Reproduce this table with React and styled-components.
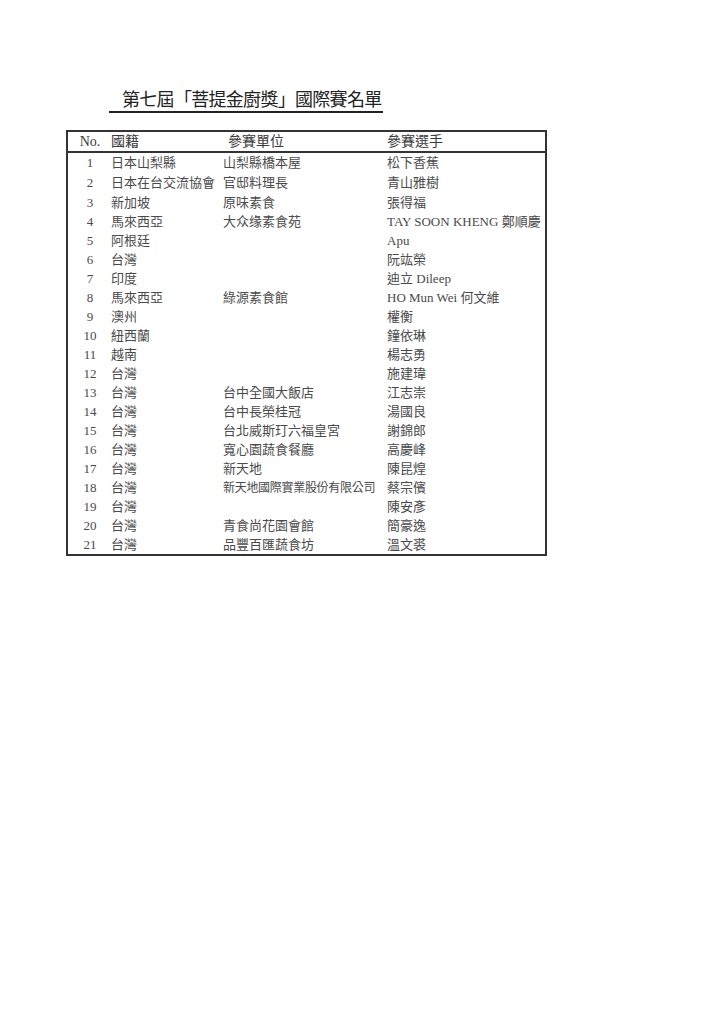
import React from "react";
import styled, { createGlobalStyle } from "styled-components";

const GlobalStyle = createGlobalStyle`
  html, body {
    margin: 0;
    padding: 0;
    background: #ffffff;
  }
  body {
    font-family: "Liberation Serif", "Noto Sans CJK TC", serif;
    color: #333;
  }
`;

const rows = [
  ["1", "日本山梨縣", "山梨縣橋本屋", "松下香蕉"],
  ["2", "日本在台交流協會", "官邸料理長", "青山雅樹"],
  ["3", "新加坡", "原味素食", "張得福"],
  ["4", "馬來西亞", "大众缘素食苑", "TAY SOON KHENG 鄭順慶"],
  ["5", "阿根廷", "", "Apu"],
  ["6", "台灣", "", "阮竑榮"],
  ["7", "印度", "", "迪立 Dileep"],
  ["8", "馬來西亞", "綠源素食館", "HO Mun Wei 何文維"],
  ["9", "澳州", "", "權衡"],
  ["10", "紐西蘭", "", "鐘依琳"],
  ["11", "越南", "", "楊志勇"],
  ["12", "台灣", "", "施建瑋"],
  ["13", "台灣", "台中全國大飯店", "江志崇"],
  ["14", "台灣", "台中長榮桂冠", "湯國良"],
  ["15", "台灣", "台北威斯玎六福皇宮", "謝錦郎"],
  ["16", "台灣", "寬心園蔬食餐廳", "高慶峰"],
  ["17", "台灣", "新天地", "陳昆煌"],
  ["18", "台灣", "新天地國際實業股份有限公司", "蔡宗儐"],
  ["19", "台灣", "", "陳安彥"],
  ["20", "台灣", "青食尚花園會館", "簡豪逸"],
  ["21", "台灣", "品豐百匯蔬食坊", "溫文裘"],
];

const rowHeight = (i) => (i === 0 ? 18 : i === 1 ? 22 : 19);

const Page = styled.div`
  width: 724px;
  height: 1024px;
  padding: 89px 0 0 66px;
  box-sizing: border-box;
`;

const Title = styled.h1`
  margin: 0 0 17px 43px;
  padding-left: 13px;
  width: 261px;
  font-size: 18px;
  font-weight: normal;
  line-height: 22px;
  color: #222;
  border-bottom: 2px solid #222;
  letter-spacing: -0.7px;
  white-space: nowrap;
`;

const Table = styled.div`
  width: 481px;
  border: 2px solid #333;
  box-sizing: border-box;
`;

const Row = styled.div`
  display: grid;
  grid-template-columns: 40px 115px 164px 1fr;
  align-items: center;
  height: ${(p) => p.$h}px;
  font-size: ${(p) => (p.$head ? 14 : 13)}px;
  border-bottom: ${(p) => (p.$head ? "2px solid #333" : "none")};
  box-sizing: ${(p) => (p.$head ? "content-box" : "border-box")};
`;

const Cell = styled.div`
  white-space: nowrap;
  overflow: visible;
  text-align: ${(p) => (p.$center ? "center" : "left")};
  padding-left: ${(p) => p.$pad || 0}px;
  line-height: 1;
  color: ${(p) => (p.$dark ? "#3a3a3a" : "#4a4a4a")};
`;

const Small = styled.span`
  font-size: 12px;
  letter-spacing: -0.3px;
`;

export default function App() {
  return (
    <Page>
      <GlobalStyle />
      <Title>第七屆「菩提金廚獎」國際賽名單</Title>
      <Table>
        <Row $head $h={19}>
          <Cell $center $pad={4} $dark>No.</Cell>
          <Cell $pad={3} $dark>國籍</Cell>
          <Cell $pad={5} $dark>參賽單位</Cell>
          <Cell $pad={0} $dark>參賽選手</Cell>
        </Row>
        {rows.map((r, i) => (
          <Row key={r[0]} $h={rowHeight(i)}>
            <Cell $center $pad={4}>{r[0]}</Cell>
            <Cell $pad={3}>{r[1]}</Cell>
            <Cell $pad={0}>
              {r[2].length > 10 ? <Small>{r[2]}</Small> : r[2]}
            </Cell>
            <Cell $pad={0}>{r[3]}</Cell>
          </Row>
        ))}
      </Table>
    </Page>
  );
}
